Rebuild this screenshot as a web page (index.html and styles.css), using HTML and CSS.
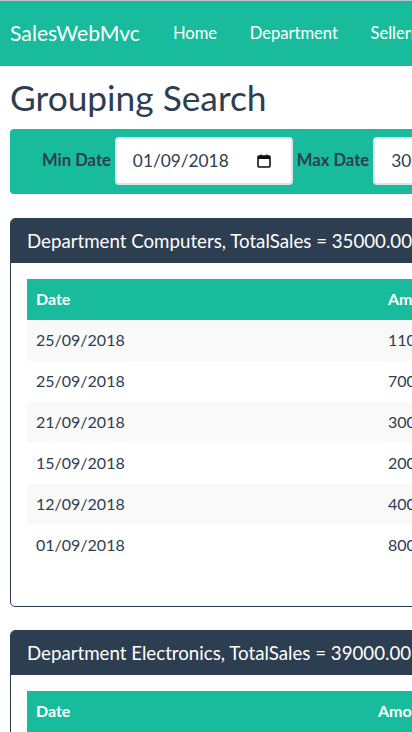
FILE: index.html
```html
<!DOCTYPE html>
<html lang="en">
<head>
<meta charset="utf-8">
<title>Grouping Search - SalesWebMvc</title>
<link rel="stylesheet" href="styles.css">
</head>
<body>
<nav class="navbar">
  <a class="brand" href="#">SalesWebMvc</a>
  <ul class="nav-links">
    <li><a href="#">Home</a></li>
    <li><a href="#">Department</a></li>
    <li><a href="#">Sellers</a></li>
    <li><a href="#">Sales</a></li>
    <li><a href="#">About</a></li>
  </ul>
</nav>
<main class="container">
  <h1 class="page-title">Grouping Search</h1>
  <form class="search-bar">
    <div class="form-group">
      <label class="field-label">Min Date</label>
      <div class="date-field">
        <span class="date-value">01/09/2018</span>
        <svg class="cal-icon" width="14" height="14" viewBox="0 0 14 14" aria-hidden="true"><rect x="1" y="2" width="12" height="11" rx="1" fill="none" stroke="#111" stroke-width="1.6"/><rect x="1" y="2" width="12" height="3" fill="#111"/><rect x="3.5" y="0.5" width="1.5" height="3" fill="#111"/><rect x="9" y="0.5" width="1.5" height="3" fill="#111"/></svg>
      </div>
    </div>
    <div class="form-group">
      <label class="field-label">Max Date</label>
      <div class="date-field">
        <span class="date-value">30/09/2018</span>
        <svg class="cal-icon" width="14" height="14" viewBox="0 0 14 14" aria-hidden="true"><rect x="1" y="2" width="12" height="11" rx="1" fill="none" stroke="#111" stroke-width="1.6"/><rect x="1" y="2" width="12" height="3" fill="#111"/><rect x="3.5" y="0.5" width="1.5" height="3" fill="#111"/><rect x="9" y="0.5" width="1.5" height="3" fill="#111"/></svg>
      </div>
    </div>
    <button type="button" class="btn-filter">Filter</button>
  </form>

  <section class="panel">
    <div class="panel-heading">Department Computers, TotalSales = 35000.00</div>
    <div class="panel-body">
      <table class="sales-table">
        <thead>
          <tr><th class="col-date col-date-a">Date</th><th class="col-amount">Amount</th><th>Seller</th><th>Status</th></tr>
        </thead>
        <tbody>
          <tr><td>25/09/2018</td><td>11000.00</td><td>Bob Brown</td><td>Billed</td></tr>
          <tr><td>25/09/2018</td><td>7000.00</td><td>Alex Green</td><td>Billed</td></tr>
          <tr><td>21/09/2018</td><td>3000.00</td><td>Maria Green</td><td>Billed</td></tr>
          <tr><td>15/09/2018</td><td>2000.00</td><td>Bob Brown</td><td>Billed</td></tr>
          <tr><td>12/09/2018</td><td>4000.00</td><td>Alex Grey</td><td>Billed</td></tr>
          <tr><td>01/09/2018</td><td>8000.00</td><td>Bob Brown</td><td>Billed</td></tr>
        </tbody>
      </table>
    </div>
  </section>

  <section class="panel">
    <div class="panel-heading">Department Electronics, TotalSales = 39000.00</div>
    <div class="panel-body">
      <table class="sales-table">
        <thead>
          <tr><th class="col-date col-date-b">Date</th><th class="col-amount">Amount</th><th>Seller</th><th>Status</th></tr>
        </thead>
        <tbody>
          <tr><td>28/09/2018</td><td>9000.00</td><td>Martha Red</td><td>Billed</td></tr>
          <tr><td>20/09/2018</td><td>10000.00</td><td>Donald Blue</td><td>Billed</td></tr>
          <tr><td>10/09/2018</td><td>20000.00</td><td>Martha Red</td><td>Billed</td></tr>
        </tbody>
      </table>
    </div>
  </section>
</main>
</body>
</html>
```

FILE: styles.css
```css
html, body {
  margin: 0;
  padding: 0;
}

body {
  font-family: Lato, "Liberation Sans", sans-serif;
  font-size: 16px;
  line-height: 1.5;
  color: #2c3e50;
  background: #fff;
  overflow: hidden;
  border-top: 1px solid #bcc3cc;
}

.navbar {
  display: flex;
  align-items: center;
  height: 65px;
  background: #18bc9c;
  padding-left: 10px;
  white-space: nowrap;
}

.brand {
  color: #fff;
  font-size: 21.2px;
  text-decoration: none;
  margin-right: 33px;
  flex-shrink: 0;
}

.nav-links {
  display: flex;
  list-style: none;
  margin: 0;
  padding: 0;
  gap: 32.5px;
  flex-shrink: 0;
}

.nav-links a {
  color: #fff;
  text-decoration: none;
  font-size: 16.6px;
}

.container {
  width: 760px;
  padding: 0 10px;
}

.page-title {
  font-size: 35.3px;
  font-weight: 400;
  line-height: 1.1;
  margin: 13px 0 11px;
}

.search-bar {
  display: flex;
  align-items: center;
  background: #18bc9c;
  border-radius: 4px;
  padding: 8px 0 9px 32px;
  gap: 4px;
  white-space: nowrap;
}

.form-group {
  display: flex;
  align-items: center;
  gap: 4px;
}

.field-label {
  font-weight: 700;
  font-size: 16.6px;
  color: #2c3e50;
}

.date-field {
  display: flex;
  align-items: center;
  justify-content: space-between;
  box-sizing: border-box;
  width: 178px;
  height: 48px;
  padding: 0 20px 0 16px;
  background: #fff;
  border: 2px solid #dce4ec;
  border-radius: 4px;
  font-size: 17.3px;
  color: #2c3e50;
}

.cal-icon {
  display: block;
}

.btn-filter {
  font: inherit;
  color: #fff;
  background: #2c3e50;
  border: 0;
  border-radius: 4px;
  padding: 10px 16px;
}

.panel {
  border: 1px solid #2c3e50;
  border-radius: 5px;
  margin-top: 24px;
  overflow: hidden;
}

.panel + .panel {
  margin-top: 23px;
}

.panel-heading {
  background: #2c3e50;
  color: #fff;
  font-size: 18.7px;
  height: 44px;
  line-height: 44px;
  padding-left: 16px;
  white-space: nowrap;
}

.panel-body {
  padding: 16px 16px 40px;
}

.sales-table {
  width: 720px;
  border-collapse: collapse;
  table-layout: fixed;
}

.sales-table th,
.sales-table td {
  box-sizing: border-box;
  height: 41px;
  padding: 0 9px;
  text-align: left;
  white-space: nowrap;
  font-size: 16px;
}

.sales-table th {
  background: #18bc9c;
  color: #fff;
  font-weight: 700;
}

.sales-table tbody tr:nth-child(odd) td {
  background: #f9f9f9;
}

.col-date-a {
  width: 352px;
}

.col-date-b {
  width: 342px;
}

.col-amount {
  width: 140px;
}
```
